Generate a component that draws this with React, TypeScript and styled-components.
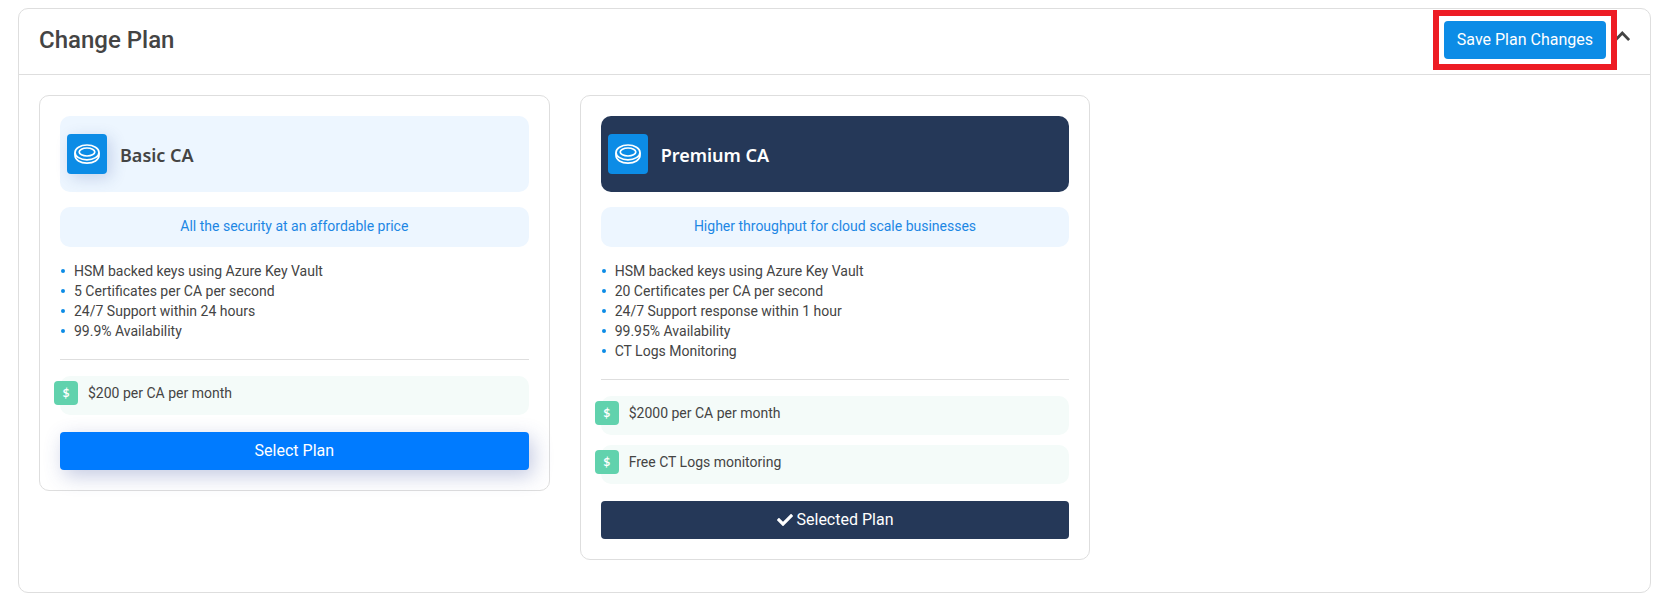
import React from 'react';
import styled, { createGlobalStyle } from 'styled-components';
import { FaCheck } from 'react-icons/fa';

const GlobalStyle = createGlobalStyle`
  *, *::before, *::after { box-sizing: border-box; }
  body {
    margin: 0;
    background: #fff;
    color: #444;
    font-family: Roboto, "Liberation Sans", sans-serif;
    font-size: 14px;
    line-height: 20px;
  }
`;

const Panel = styled.section`
  margin: 8px 15px 4px 18px;
  border: 1px solid #dedede;
  border-radius: 10px;
`;

const PanelHeader = styled.header`
  display: flex;
  align-items: center;
  justify-content: space-between;
  padding: 12px 20px 15px;
  border-bottom: 1px solid #dedede;
`;

const PanelTitle = styled.h1`
  margin: 0;
  font-size: 24px;
  line-height: 38px;
  font-weight: 500;
`;

const HeaderActions = styled.div`
  display: flex;
  align-items: flex-start;
  gap: 8px;
`;

const Highlight = styled.div`
  position: relative;
  z-index: 1;

  &::after {
    content: '';
    position: absolute;
    inset: -11px;
    border: 6px solid #ed1c24;
    pointer-events: none;
  }
`;

const Button = styled.button`
  display: flex;
  align-items: center;
  justify-content: center;
  gap: 4px;
  height: 38px;
  padding: 0 13px;
  border: 0;
  border-radius: 4px;
  background: #0c8ce6;
  color: #fff;
  font-family: inherit;
  font-size: 16px;
  line-height: 24px;
  cursor: pointer;
`;

const PlanButton = styled(Button)<{ $selected?: boolean }>`
  width: 100%;
  margin-top: 17px;
  background: ${(p) => (p.$selected ? '#253858' : '#007bff')};
  box-shadow: ${(p) => (p.$selected ? 'none' : '4px 6px 20px rgba(60, 80, 160, 0.3)')};
`;

const CollapseButton = styled.button`
  display: flex;
  margin-top: 9px;
  padding: 0;
  border: 0;
  background: none;
  color: #444;
  cursor: pointer;
`;

const PlanGrid = styled.div`
  display: grid;
  grid-template-columns: repeat(3, 1fr);
  gap: 30px;
  align-items: start;
  padding: 20px 19px 32px 20px;
`;

const PlanCard = styled.article`
  padding: 20px;
  border: 1px solid #dedede;
  border-radius: 10px;
`;

const PlanHeader = styled.div<{ $dark?: boolean }>`
  display: flex;
  align-items: center;
  gap: 13px;
  height: 76px;
  padding: 0 7px;
  border-radius: 10px;
  background: ${(p) => (p.$dark ? '#253858' : '#edf6ff')};
  color: ${(p) => (p.$dark ? '#fff' : '#444')};
`;

const PlanIcon = styled.span<{ $flat?: boolean }>`
  display: flex;
  align-items: center;
  justify-content: center;
  width: 40px;
  height: 40px;
  border-radius: 4px;
  background: #0c8ce6;
  color: #fff;
  box-shadow: ${(p) => (p.$flat ? 'none' : '4px 4px 16px rgba(40, 70, 150, 0.2)')};
`;

const PlanName = styled.h2`
  margin: 0;
  padding-top: 2px;
  font-family: "Noto Sans", "Open Sans", sans-serif;
  font-size: 18px;
  line-height: 24px;
  font-weight: 600;
`;

const Tagline = styled.p`
  margin: 15px 0 14px;
  padding: 9px 10px 11px;
  border-radius: 10px;
  background: #edf6ff;
  color: #1d87e4;
  text-align: center;
`;

const Features = styled.ul`
  margin: 0;
  padding: 0 0 18px;
  border-bottom: 1px solid #dedede;
  list-style: none;
`;

const Feature = styled.li`
  display: flex;
  align-items: center;
  gap: 9px;
  padding-left: 1px;

  &::before {
    content: '';
    width: 4px;
    height: 4px;
    border-radius: 50%;
    background: #0c8ce6;
  }
`;

const Prices = styled.ul`
  display: grid;
  gap: 10px;
  margin: 16px 0 0;
  padding: 0;
  list-style: none;
`;

const Price = styled.li`
  display: flex;
  align-items: flex-start;
  gap: 10px;
  height: 39px;
  padding-top: 5px;
  border-radius: 10px;
  background: #f4fbf9;
`;

const PriceBadge = styled.span`
  width: 24px;
  height: 24px;
  margin-left: -6px;
  border-radius: 4px;
  background: #61d2ad;
  color: #fff;
  font-family: Lato, sans-serif;
  font-size: 12px;
  line-height: 24px;
  font-weight: 700;
  text-align: center;
`;

const PriceText = styled.span`
  line-height: 24px;
`;

const CoinIcon = () => (
  <svg width="26" height="20" viewBox="0 0 26 20" fill="none" stroke="currentColor" strokeWidth="1.7" aria-hidden="true">
    <ellipse cx="13" cy="8.4" rx="12" ry="7.4" />
    <ellipse cx="13" cy="8" rx="7.8" ry="4" />
    <path d="M1 8.400v3.200C1 15.900 6.300 19.100 13 19.100s12-3.200 12-7.500v-3.200" />
  </svg>
);

const ChevronUp = () => (
  <svg width="16" height="12" viewBox="0 0 16 12" fill="none" stroke="currentColor" strokeWidth="2.8" aria-hidden="true">
    <path d="M1.500 10 8.300 3l6.800 7" />
  </svg>
);

type Plan = { name: string; tagline: string; features: string[]; prices: string[]; selected?: boolean };

const plans: Plan[] = [
  {
    name: 'Basic CA',
    tagline: 'All the security at an affordable price',
    features: [
      'HSM backed keys using Azure Key Vault',
      '5 Certificates per CA per second',
      '24/7 Support within 24 hours',
      '99.9% Availability',
    ],
    prices: ['$200 per CA per month'],
  },
  {
    name: 'Premium CA',
    tagline: 'Higher throughput for cloud scale businesses',
    features: [
      'HSM backed keys using Azure Key Vault',
      '20 Certificates per CA per second',
      '24/7 Support response within 1 hour',
      '99.95% Availability',
      'CT Logs Monitoring',
    ],
    prices: ['$2000 per CA per month', 'Free CT Logs monitoring'],
    selected: true,
  },
];

export default function App() {
  return (
    <>
      <GlobalStyle />
      <Panel>
        <PanelHeader>
          <PanelTitle>Change Plan</PanelTitle>
          <HeaderActions>
            <Highlight>
              <Button type="button">Save Plan Changes</Button>
            </Highlight>
            <CollapseButton type="button" aria-label="Collapse" aria-expanded="true">
              <ChevronUp />
            </CollapseButton>
          </HeaderActions>
        </PanelHeader>
        <PlanGrid>
          {plans.map((plan) => (
            <PlanCard key={plan.name}>
              <PlanHeader $dark={plan.selected}>
                <PlanIcon $flat={plan.selected}>
                  <CoinIcon />
                </PlanIcon>
                <PlanName>{plan.name}</PlanName>
              </PlanHeader>
              <Tagline>{plan.tagline}</Tagline>
              <Features>
                {plan.features.map((f) => (
                  <Feature key={f}>{f}</Feature>
                ))}
              </Features>
              <Prices>
                {plan.prices.map((price) => (
                  <Price key={price}>
                    <PriceBadge aria-hidden="true">$</PriceBadge>
                    <PriceText>{price}</PriceText>
                  </Price>
                ))}
              </Prices>
              <PlanButton type="button" $selected={plan.selected}>
                {plan.selected && <FaCheck aria-hidden="true" />}
                {plan.selected ? 'Selected Plan' : 'Select Plan'}
              </PlanButton>
            </PlanCard>
          ))}
        </PlanGrid>
      </Panel>
    </>
  );
}
